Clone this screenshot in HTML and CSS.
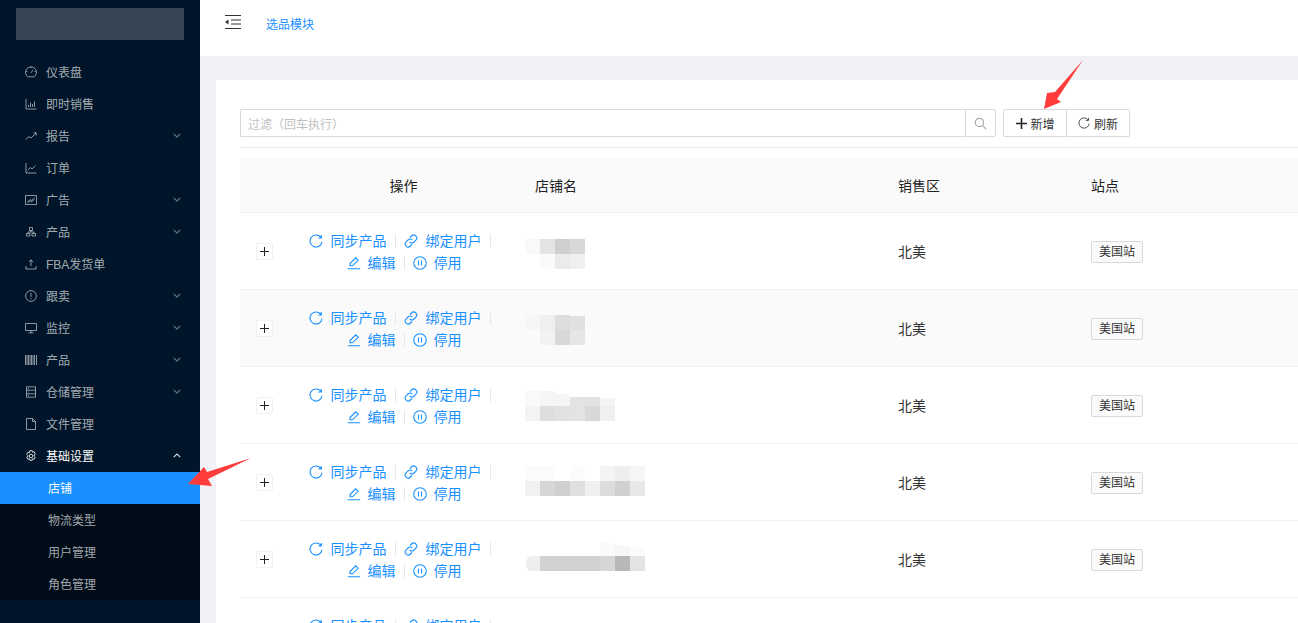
FILE: index.html
```html
<!DOCTYPE html>
<html lang="zh-CN">
<head>
<meta charset="utf-8">
<title>店铺</title>
<link rel="stylesheet" href="styles.css">
</head>
<body>
<svg class="defs" aria-hidden="true">
  <symbol id="i-dash" viewBox="0 0 12 12"><path d="M2.800 10.800h6.400A5.500 5.500 0 1 0 2.800 10.800zM6 6.800l2-3M6 1v1.200M1.300 5.500h1.200M9.500 5.500h1.200"/></symbol>
  <symbol id="i-bar" viewBox="0 0 12 12"><path d="M1 1v10h10.500M3.500 9V7M5.500 9V4.500M7.500 9V6M9.500 9V3.500"/></symbol>
  <symbol id="i-rise" viewBox="0 0 12 12"><path d="M.5 9.500l3.500-3 2 1.500L11 3M8.500 2.800H11.200V5.500"/></symbol>
  <symbol id="i-line" viewBox="0 0 12 12"><path d="M1 1v10h10.500M3 8l2.500-2.500 1.500 1.500 3.500-3.500"/></symbol>
  <symbol id="i-area" viewBox="0 0 12 12"><path d="M.5 1.500h11v9H.5zM2.500 8l2.500-2.500 1.500 1.200L9.500 3.500M2.500 8.800l2.500-2 1.500 1 3-2.300"/></symbol>
  <symbol id="i-cluster" viewBox="0 0 12 12"><path d="M4.500 1.500h3v3h-3zM1.500 7.500h3.500v2.500H1.500zM7 7.500h3.500v2.500H7zM6 4.500V6M3 7.500V6h6v1.500"/></symbol>
  <symbol id="i-upload" viewBox="0 0 12 12"><path d="M1 8v3h10V8M6 8V2M4 4l2-2.200L8 4"/></symbol>
  <symbol id="i-warn" viewBox="0 0 12 12"><circle cx="6" cy="6" r="5.400"/><path d="M6 2.800v4.200M6 8.200v1.200"/></symbol>
  <symbol id="i-desk" viewBox="0 0 12 12"><path d="M.5 1.500h11v7H.5zM6 8.500v2M3.500 10.800h5"/></symbol>
  <symbol id="i-code" viewBox="0 0 12 12"><path d="M.5 1v10M2 1v10M3.500 1v10M5 1v10M6.500 1v10M8 1v10M9.500 1v10M11.500 1v10"/></symbol>
  <symbol id="i-db" viewBox="0 0 12 12"><path d="M1.500 .8h9v10.400h-9zM1.500 4.200h9M1.500 7.800h9M3 2.500h1M3 6h1M3 9.500h1"/></symbol>
  <symbol id="i-file" viewBox="0 0 12 12"><path d="M1.500.5h6L10.500 3.500v8h-9zM7.500.5v3h3"/></symbol>
  <symbol id="i-gear" viewBox="0 0 12 12"><path d="M4.800.7h2.400l.4 1.500 1.500-.4 1.200 2.100-1.100 1.100v1l1.100 1.100-1.200 2.100-1.500-.4-.4 1.500H4.800l-.4-1.500-1.500.4-1.200-2.100L2.800 6.500v-1L1.700 4.400l1.200-2.100 1.500.4z"/><circle cx="6" cy="6" r="1.800"/></symbol>
  <symbol id="i-down" viewBox="0 0 8 5"><path d="M.7.800L4 4l3.300-3.200"/></symbol>
  <symbol id="i-reload" viewBox="0 0 14 14"><path d="M11.700 3.200A6 6 0 1 0 13 7.800M12.300 1v3H9.300"/></symbol>
  <symbol id="i-link" viewBox="0 0 14 14"><path d="M6 3.500l1.500-1.500a3 3 0 0 1 4.400 4.200L10 8a3 3 0 0 1-4.200 0M8 10.500L6.500 12A3 3 0 0 1 2.100 7.800L4 6a3 3 0 0 1 4.200 0"/></symbol>
  <symbol id="i-edit" viewBox="0 0 14 14"><path d="M3 9.800V7.500L8.700 1.800l2.500 2.500L5.400 9.800zM.8 12.700h12.400"/></symbol>
  <symbol id="i-pause" viewBox="0 0 14 14"><circle cx="7" cy="7" r="6.300"/><path d="M5.500 4.500v5M8.500 4.500v5"/></symbol>
  <symbol id="i-search" viewBox="0 0 12 12"><circle cx="5" cy="5" r="3.800"/><path d="M7.800 7.800l3.400 3.400"/></symbol>
</svg>

<div class="app">
  <aside class="sider">
    <div class="logo"></div>
    <nav class="menu">
      <a class="item"><svg class="ic"><use href="#i-dash"/></svg><span>仪表盘</span></a>
      <a class="item"><svg class="ic"><use href="#i-bar"/></svg><span>即时销售</span></a>
      <a class="item"><svg class="ic"><use href="#i-rise"/></svg><span>报告</span><svg class="chev"><use href="#i-down"/></svg></a>
      <a class="item"><svg class="ic"><use href="#i-line"/></svg><span>订单</span></a>
      <a class="item"><svg class="ic"><use href="#i-area"/></svg><span>广告</span><svg class="chev"><use href="#i-down"/></svg></a>
      <a class="item"><svg class="ic"><use href="#i-cluster"/></svg><span>产品</span><svg class="chev"><use href="#i-down"/></svg></a>
      <a class="item"><svg class="ic"><use href="#i-upload"/></svg><span>FBA发货单</span></a>
      <a class="item"><svg class="ic"><use href="#i-warn"/></svg><span>跟卖</span><svg class="chev"><use href="#i-down"/></svg></a>
      <a class="item"><svg class="ic"><use href="#i-desk"/></svg><span>监控</span><svg class="chev"><use href="#i-down"/></svg></a>
      <a class="item"><svg class="ic"><use href="#i-code"/></svg><span>产品</span><svg class="chev"><use href="#i-down"/></svg></a>
      <a class="item"><svg class="ic"><use href="#i-db"/></svg><span>仓储管理</span><svg class="chev"><use href="#i-down"/></svg></a>
      <a class="item"><svg class="ic"><use href="#i-file"/></svg><span>文件管理</span></a>
      <a class="item open"><svg class="ic"><use href="#i-gear"/></svg><span>基础设置</span><svg class="chev up"><use href="#i-down"/></svg></a>
      <div class="submenu">
        <a class="subitem active">店铺</a>
        <a class="subitem">物流类型</a>
        <a class="subitem">用户管理</a>
        <a class="subitem">角色管理</a>
      </div>
    </nav>
  </aside>

  <div class="layout">
    <header class="topbar">
      <svg class="collapse" viewBox="0 0 16 14"><path d="M0 .5h16M0 13.500h16M6 5h10M6 9h10"/><path class="fill" d="M0 7l3.500-2.500v5z"/></svg>
      <a class="crumb">选品模块</a>
    </header>
    <main class="content">
      <section class="card">
        <div class="toolbar">
          <div class="search">
            <input class="search-input" type="text" placeholder="过滤（回车执行）">
            <button class="search-btn"><svg class="search-ic"><use href="#i-search"/></svg></button>
          </div>
          <div class="btn-group">
            <button class="btn"><svg class="plus" viewBox="0 0 11 11"><path d="M5.500 0v11M0 5.500h11"/></svg>新增</button>
            <button class="btn"><svg class="btn-reload"><use href="#i-reload"/></svg>刷新</button>
          </div>
        </div>
        <table class="table">
          <colgroup><col class="c-expand"><col class="c-op"><col class="c-name"><col class="c-region"><col class="c-site"></colgroup>
          <thead>
            <tr><th></th><th class="center">操作</th><th>店铺名</th><th>销售区</th><th>站点</th></tr>
          </thead>
          <tbody>
            <tr>
              <td><button class="expand"><svg viewBox="0 0 9 9"><path d="M4.500 0v9M0 4.500h9"/></svg></button></td>
              <td class="ops">
                <div class="line first"><a class="op"><svg class="oi"><use href="#i-reload"/></svg>同步产品</a><i class="sep"></i><a class="op"><svg class="oi"><use href="#i-link"/></svg>绑定用户</a><i class="sep"></i></div>
                <div class="line second"><a class="op"><svg class="oi"><use href="#i-edit"/></svg>编辑</a><i class="sep"></i><a class="op"><svg class="oi"><use href="#i-pause"/></svg>停用</a></div>
              </td>
              <td><svg class="mosaic m1" width="60" height="30"><rect width="15" height="15" fill="#f9f9f9"/><rect x="15" width="15" height="15" fill="#e4e4e4"/><rect x="30" width="15" height="15" fill="#cfcfcf"/><rect x="45" width="15" height="15" fill="#d8d8d8"/><rect y="15" x="15" width="15" height="15" fill="#fafafa"/><rect y="15" x="30" width="15" height="15" fill="#ebebeb"/><rect y="15" x="45" width="15" height="15" fill="#f0f0f0"/></svg></td>
              <td>北美</td>
              <td><span class="tag">美国站</span></td>
            </tr>
            <tr class="alt">
              <td><button class="expand"><svg viewBox="0 0 9 9"><path d="M4.500 0v9M0 4.500h9"/></svg></button></td>
              <td class="ops">
                <div class="line first"><a class="op"><svg class="oi"><use href="#i-reload"/></svg>同步产品</a><i class="sep"></i><a class="op"><svg class="oi"><use href="#i-link"/></svg>绑定用户</a><i class="sep"></i></div>
                <div class="line second"><a class="op"><svg class="oi"><use href="#i-edit"/></svg>编辑</a><i class="sep"></i><a class="op"><svg class="oi"><use href="#i-pause"/></svg>停用</a></div>
              </td>
              <td><svg class="mosaic m2" width="60" height="30"><rect width="15" height="15" fill="#f6f6f6"/><rect x="15" width="15" height="15" fill="#efefef"/><rect x="30" width="15" height="15" fill="#dddddd"/><rect x="45" y="1" width="15" height="14" fill="#e0e0e0"/><rect y="15" x="15" width="15" height="15" fill="#f2f2f2"/><rect y="15" x="30" width="15" height="15" fill="#d8d8d8"/><rect y="15" x="45" width="15" height="15" fill="#e6e6e6"/></svg></td>
              <td>北美</td>
              <td><span class="tag">美国站</span></td>
            </tr>
            <tr>
              <td><button class="expand"><svg viewBox="0 0 9 9"><path d="M4.500 0v9M0 4.500h9"/></svg></button></td>
              <td class="ops">
                <div class="line first"><a class="op"><svg class="oi"><use href="#i-reload"/></svg>同步产品</a><i class="sep"></i><a class="op"><svg class="oi"><use href="#i-link"/></svg>绑定用户</a><i class="sep"></i></div>
                <div class="line second"><a class="op"><svg class="oi"><use href="#i-edit"/></svg>编辑</a><i class="sep"></i><a class="op"><svg class="oi"><use href="#i-pause"/></svg>停用</a></div>
              </td>
              <td><svg class="mosaic m3" width="90" height="30"><rect width="15" height="15" fill="#f9f9f9"/><rect x="15" width="15" height="15" fill="#f5f5f5"/><rect x="30" y="3" width="15" height="12" fill="#f5f5f5"/><rect x="45" y="6" width="15" height="9" fill="#e3e3e3"/><rect x="60" y="6" width="15" height="9" fill="#e3e3e3"/><rect x="75" y="7" width="15" height="8" fill="#f4f4f4"/><rect y="15" width="15" height="15" fill="#f3f3f3"/><rect y="15" x="15" width="15" height="15" fill="#dedede"/><rect y="15" x="30" width="15" height="15" fill="#e2e2e2"/><rect y="15" x="45" width="15" height="15" fill="#e3e3e3"/><rect y="15" x="60" width="15" height="15" fill="#d8d8d8"/><rect y="15" x="75" width="15" height="15" fill="#efefef"/></svg></td>
              <td>北美</td>
              <td><span class="tag">美国站</span></td>
            </tr>
            <tr>
              <td><button class="expand"><svg viewBox="0 0 9 9"><path d="M4.500 0v9M0 4.500h9"/></svg></button></td>
              <td class="ops">
                <div class="line first"><a class="op"><svg class="oi"><use href="#i-reload"/></svg>同步产品</a><i class="sep"></i><a class="op"><svg class="oi"><use href="#i-link"/></svg>绑定用户</a><i class="sep"></i></div>
                <div class="line second"><a class="op"><svg class="oi"><use href="#i-edit"/></svg>编辑</a><i class="sep"></i><a class="op"><svg class="oi"><use href="#i-pause"/></svg>停用</a></div>
              </td>
              <td><svg class="mosaic m4" width="120" height="30"><rect width="15" height="15" fill="#fbfbfb"/><rect x="15" width="15" height="15" fill="#fbfbfb"/><rect x="45" width="15" height="15" fill="#fcfcfc"/><rect x="75" width="15" height="15" fill="#f4f4f4"/><rect x="90" width="15" height="15" fill="#eeeeee"/><rect x="105" width="15" height="15" fill="#f6f6f6"/><rect y="15" width="15" height="15" fill="#f1f1f1"/><rect y="15" x="15" width="15" height="15" fill="#d6d6d6"/><rect y="15" x="30" width="15" height="15" fill="#cfcfcf"/><rect y="15" x="45" width="15" height="15" fill="#dfdfdf"/><rect y="15" x="60" width="15" height="15" fill="#efefef"/><rect y="15" x="75" width="15" height="15" fill="#dcdcdc"/><rect y="15" x="90" width="15" height="15" fill="#d0d0d0"/><rect y="15" x="105" width="15" height="15" fill="#e8e8e8"/></svg></td>
              <td>北美</td>
              <td><span class="tag">美国站</span></td>
            </tr>
            <tr>
              <td><button class="expand"><svg viewBox="0 0 9 9"><path d="M4.500 0v9M0 4.500h9"/></svg></button></td>
              <td class="ops">
                <div class="line first"><a class="op"><svg class="oi"><use href="#i-reload"/></svg>同步产品</a><i class="sep"></i><a class="op"><svg class="oi"><use href="#i-link"/></svg>绑定用户</a><i class="sep"></i></div>
                <div class="line second"><a class="op"><svg class="oi"><use href="#i-edit"/></svg>编辑</a><i class="sep"></i><a class="op"><svg class="oi"><use href="#i-pause"/></svg>停用</a></div>
              </td>
              <td><svg class="mosaic m5" width="120" height="30"><path d="M75 0l15 3v12H75z" fill="#fafafa"/><path d="M90 3l15 3v9H90z" fill="#f6f6f6"/><path d="M105 6l15 1v8h-15z" fill="#fbfbfb"/><path d="M15 15v15H6q-5 0-5-7 0-8 6-8z" fill="#eeeeee"/><rect y="15" x="15" width="60" height="15" fill="#d2d2d2"/><rect y="15" x="75" width="15" height="15" fill="#d6d6d6"/><rect y="15" x="90" width="15" height="15" fill="#b8b8b8"/><rect y="15" x="105" width="15" height="15" fill="#e4e4e4"/></svg></td>
              <td>北美</td>
              <td><span class="tag">美国站</span></td>
            </tr>
            <tr>
              <td><button class="expand"><svg viewBox="0 0 9 9"><path d="M4.500 0v9M0 4.500h9"/></svg></button></td>
              <td class="ops">
                <div class="line first"><a class="op"><svg class="oi"><use href="#i-reload"/></svg>同步产品</a><i class="sep"></i><a class="op"><svg class="oi"><use href="#i-link"/></svg>绑定用户</a><i class="sep"></i></div>
                <div class="line second"><a class="op"><svg class="oi"><use href="#i-edit"/></svg>编辑</a><i class="sep"></i><a class="op"><svg class="oi"><use href="#i-pause"/></svg>停用</a></div>
              </td>
              <td></td>
              <td>北美</td>
              <td><span class="tag">美国站</span></td>
            </tr>
          </tbody>
        </table>
      </section>
    </main>
  </div>

  <svg class="arrow arrow-add" viewBox="0 0 42 52"><polygon points="41,1 13,33 5,34 2,50 19,43 15,40"/></svg>
  <svg class="arrow arrow-store" viewBox="0 0 66 32"><polygon points="64,2 20,16 17,11 1,28 25,30 21,23"/></svg>
</div>
</body>
</html>
```

FILE: styles.css
```css
* { box-sizing: border-box; }
html, body { margin: 0; height: 100%; overflow: hidden; }
body {
  font-family: "Liberation Sans", "Noto Sans CJK SC", sans-serif;
  font-size: 12px;
  color: #333;
  background: #f0f2f5;
}
.defs { position: absolute; width: 0; height: 0; }
.app { position: relative; display: flex; height: 623px; overflow: hidden; }

/* sidebar */
.sider { flex: 0 0 200px; background: #001529; color: rgba(255,255,255,.65); }
.logo { height: 32px; margin: 8px 16px 16px; background: #354554; }
.menu { display: flex; flex-direction: column; }
.item {
  display: flex; align-items: center;
  height: 32px; padding: 0 19px 0 25px;
}
.item span { margin-bottom: 2px; }
.ic {
  flex: none; width: 12px; height: 12px; margin-right: 9px;
  fill: none; stroke: currentColor; stroke-width: 1;
  opacity: .85;
}
.chev {
  flex: none; width: 8px; height: 5px; margin-left: auto; margin-top: -2px;
  fill: none; stroke: rgba(255,255,255,.4); stroke-width: 1.1;
}
.chev.up { transform: rotate(180deg); stroke: rgba(255,255,255,.85); }
.open { color: #fff; }
.submenu { display: flex; flex-direction: column; background: #000c17; }
.subitem { display: flex; align-items: center; height: 32px; padding: 0 0 2px 48px; }
.subitem.active { background: #1890ff; color: #fff; }

/* top */
.layout { flex: 1; min-width: 0; display: flex; flex-direction: column; }
.topbar {
  flex: none; display: flex; align-items: flex-start;
  height: 56px; background: #fff; padding: 15px 0 0 25px;
}
.collapse { width: 16px; height: 14px; fill: none; stroke: #333; stroke-width: 1; }
.collapse .fill { fill: #333; stroke: none; }
.crumb { margin: 2px 0 0 25px; color: #1890ff; line-height: 17px; }
.content { flex: 1; padding: 24px 0 0 16px; }

/* card */
.card { height: 100%; background: #fff; padding: 29px 0 0 24px; }
.toolbar {
  display: flex; gap: 7px;
  padding-bottom: 10px; margin-bottom: 10px;
  border-bottom: 1px solid #ececec;
}
.search { flex: 0 0 756px; display: flex; height: 28px; }
.search-input {
  flex: 1; min-width: 0; height: 28px; padding: 4px 7px 0;
  border: 1px solid #d9d9d9; border-right: 0; border-radius: 2px 0 0 2px;
  font: inherit; outline: none; color: #333;
}
.search-input::placeholder { color: #bfbfbf; opacity: 1; }
.search-btn {
  flex: 0 0 31px; display: flex; align-items: center; justify-content: center;
  padding: 0; background: #fff;
  border: 1px solid #d9d9d9; border-radius: 0 2px 2px 0;
}
.search-ic { width: 13px; height: 13px; fill: none; stroke: #aaa; stroke-width: 1.1; }
.btn-group { display: flex; height: 28px; }
.btn {
  display: flex; align-items: center; justify-content: center;
  width: 64px; height: 28px; padding: 0;
  background: #fff; border: 1px solid #d9d9d9;
  font: inherit; color: #333;
}
.btn:first-child { border-radius: 2px 0 0 2px; }
.btn:last-child { border-left: 0; border-radius: 0 2px 2px 0; width: 63px; }
.plus { width: 11px; height: 11px; margin: 0 3px 0 1px; fill: none; stroke: #222; stroke-width: 1.6; }
.btn-reload { width: 12px; height: 12px; margin-right: 4px; fill: none; stroke: #444; stroke-width: 1.1; }

/* table */
.table { width: 1058px; table-layout: fixed; border-collapse: collapse; }
.c-expand { width: 50px; }
.c-op { width: 229px; }
.c-name { width: 363px; }
.c-region { width: 193px; }
.c-site { width: 223px; }
.table th {
  height: 54px; padding: 0 16px; text-align: left;
  font-size: 14px; font-weight: 400; color: #222;
  background: #fafafa; border-bottom: 1px solid #f0f0f0;
}
.table th.center { text-align: center; padding: 0 2px 0 0; }
.table td {
  height: 77px; padding: 0 16px; font-size: 14px; color: #333;
  border-bottom: 1px solid #f0f0f0;
}
.table tr.alt td { background: #fafafa; }
.table td:first-child { padding: 0 0 0 16px; }
.table td.ops { padding: 2px 0 0; color: #1890ff; }
.expand {
  display: flex; align-items: center; justify-content: center;
  width: 17px; height: 17px; padding: 0; margin-top: 2px;
  background: #fff; border: 1px solid #f0f0f0; border-radius: 2px;
}
.expand svg { width: 9px; height: 9px; fill: none; stroke: #222; stroke-width: 1; }
.line { display: flex; justify-content: center; align-items: center; height: 22px; line-height: 22px; }
.line.first { padding-right: 2px; }
.line.second { padding-right: 1px; }
.op { display: flex; align-items: center; color: #1890ff; white-space: nowrap; }
.oi { width: 14px; height: 14px; margin-right: 8px; fill: none; stroke: #1890ff; stroke-width: 1.1; }
.second .oi { margin-right: 7px; }
.sep { flex: none; width: 1px; height: 14px; margin: 0 8px; background: #e8e8e8; }
.mosaic { display: block; margin-left: -10px; }
.m1 { margin-top: 7px; }
.m2 { margin-top: 4px; }
.m3 { margin-top: 2px; }
.m4 { margin-top: -2px; }
.m5 { margin-top: -6px; }
.tag {
  display: inline-block; height: 22px; padding: 0 7px; margin-top: 2px; line-height: 20px;
  font-size: 12px; color: #333; white-space: nowrap;
  background: #fafafa; border: 1px solid #d9d9d9; border-radius: 2px;
}

/* annotation arrows over the page */
.arrow { position: absolute; fill: #ff3b3b; }
.arrow-add { left: 1042px; top: 59px; width: 42px; height: 52px; }
.arrow-store { left: 187px; top: 456px; width: 66px; height: 32px; }
```
